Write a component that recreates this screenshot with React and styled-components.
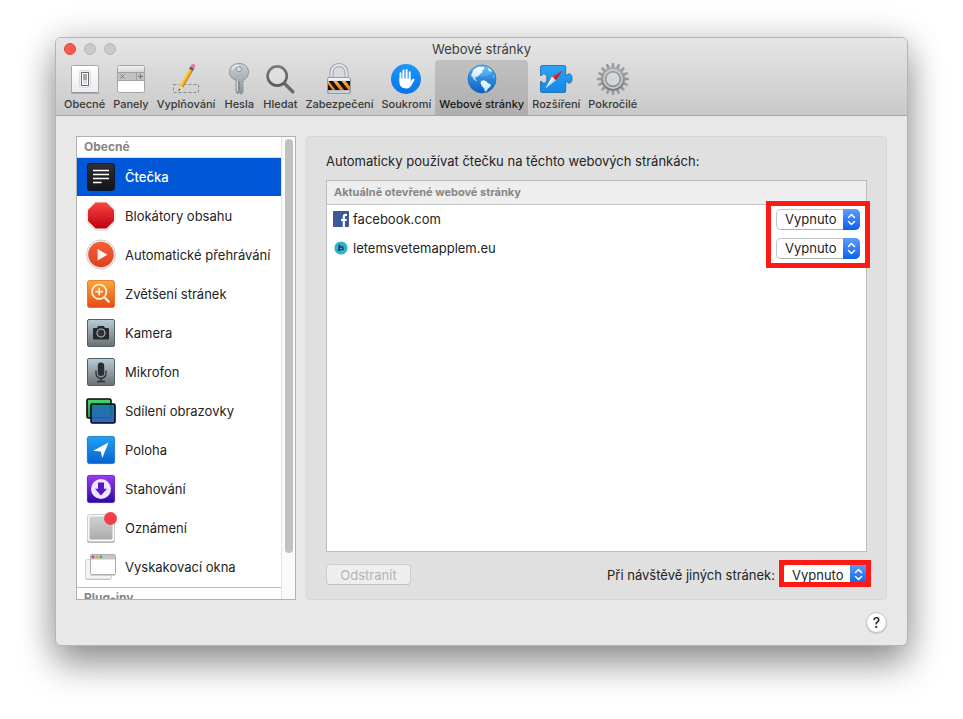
import React from "react";
import styled, { createGlobalStyle } from "styled-components";

const GlobalStyle = createGlobalStyle`
  *, *::before, *::after { box-sizing: border-box; }
  body { margin: 0; background: #fff; }
  body, button, select { font-family: Inter, "Noto Sans", sans-serif; font-size: 13px; color: #232323; }
`;

const Page = styled.main`
  height: 100vh;
  min-height: 420px;
  padding: 37px 55px 73px;
  display: flex;
`;

const Window = styled.section`
  flex: 1;
  min-width: 0;
  display: flex;
  flex-direction: column;
  overflow: hidden;
  background: #e8e8e8;
  border: 1px solid #b4b4b4;
  border-radius: 6px;
  box-shadow: 0 18px 36px rgba(0, 0, 0, 0.4), 0 0 36px rgba(0, 0, 0, 0.14);
`;

const TopBar = styled.header`
  background: linear-gradient(#e6e6e6, #c9c9c9);
  border-bottom: 1px solid #a5a5a5;
`;

const TitleRow = styled.div`
  display: grid;
  grid-template-columns: 1fr auto 1fr;
  align-items: center;
  height: 22px;
  padding: 0 8px;
`;

const Lights = styled.div`
  display: flex;
  gap: 8px;
`;

const Light = styled.button`
  width: 12px;
  height: 12px;
  padding: 0;
  border-radius: 50%;
  border: 1px solid ${(p) => (p.$close ? "#e2463f" : "#b5b5b5")};
  background: ${(p) => (p.$close ? "#fc5753" : "#cacaca")};
`;

const Title = styled.h1`
  margin: 0;
  font-size: 13px;
  line-height: 20px;
  font-weight: 400;
  color: #3c3c3c;
`;

const Toolbar = styled.nav`
  display: flex;
  padding: 0 4px;
`;

const Tool = styled.button`
  display: flex;
  flex-direction: column;
  align-items: center;
  gap: 2px;
  height: 55px;
  padding: 3px 4px 0;
  border: 0;
  border-radius: 4px 4px 0 0;
  font-size: 11px;
  line-height: 14px;
  font-weight: 500;
  white-space: nowrap;
  color: ${(p) => (p.$active ? "#161616" : "#383838")};
  background: ${(p) => (p.$active ? "rgba(0, 0, 0, 0.13)" : "transparent")};
`;

const Icon = styled.svg.attrs({ "aria-hidden": true })`
  display: block;
  flex: none;
  overflow: visible;
  width: ${(p) => p.$size ?? 32}px;
  height: ${(p) => p.$size ?? 32}px;
`;

const Content = styled.div`
  flex: 1;
  min-height: 0;
  display: grid;
  grid-template-columns: 220px minmax(0, 1fr);
  gap: 10px;
  padding: 20px 20px 0;
`;

const Sidebar = styled.aside`
  min-height: 0;
  display: grid;
  grid-template-columns: minmax(0, 1fr) 14px;
  overflow: hidden;
  background: #fff;
  border: 1px solid #b1b1b1;
`;

const SideScroll = styled.div`
  min-height: 0;
  overflow: hidden;
`;

const SideHeading = styled.h2`
  margin: 0;
  height: 21px;
  padding: 0 7px;
  font-size: 12px;
  line-height: 20px;
  font-weight: 700;
  color: #858585;
  border-top: ${(p) => (p.$divided ? "1px solid #bdbdbd" : "0")};
  border-bottom: 1px solid #d5dbe6;
`;

const SideList = styled.ul`
  list-style: none;
  margin: 0;
  padding: 0 0 1px;
  display: grid;
  gap: 1px;
`;

const SideItem = styled.button`
  display: flex;
  align-items: center;
  gap: 8px;
  width: 100%;
  height: 38px;
  padding: 0 8px;
  border: 0;
  text-align: left;
  white-space: nowrap;
  font-weight: ${(p) => (p.$active ? 500 : 400)};
  color: ${(p) => (p.$active ? "#fff" : "#232323")};
  background: ${(p) => (p.$active ? "#0058d8" : "transparent")};
`;

const Track = styled.div`
  padding: 2px 2px 46px 3px;
  background: #fafafa;
  border-left: 1px solid #e3e3e3;
`;

const Thumb = styled.div`
  width: 8px;
  height: 100%;
  border-radius: 4px;
  background: #c1c1c1;
`;

const Panel = styled.section`
  min-height: 0;
  display: flex;
  flex-direction: column;
  padding: 14px 19px;
  background: #e0e0e0;
  border: 1px solid #d7d7d7;
  border-radius: 4px;
`;

const PanelTitle = styled.h2`
  margin: 0 0 9px;
  font-size: 13px;
  line-height: 20px;
  font-weight: 400;
`;

const SitesBox = styled.div`
  flex: 1;
  min-height: 0;
  position: relative;
  background: #fff;
  border: 1px solid #bdbdbd;
`;

const Sites = styled.table`
  width: 100%;
  border-collapse: collapse;
`;

const HeadCell = styled.th`
  height: 23px;
  padding: 0 7px;
  font-size: 11px;
  line-height: 14px;
  font-weight: 700;
  text-align: left;
  color: #868686;
  background: #eeeeee;
  border-bottom: 1px solid #c4c4c4;
`;

const SiteRow = styled.tr`
  height: 29px;
`;

const SiteCell = styled.td`
  padding: ${(p) => (p.$end ? "4px 6px 4px 0" : "0 6px")};
`;

const SiteName = styled.div`
  display: flex;
  align-items: center;
  gap: 4px;
`;

const SelectWrap = styled.div`
  position: relative;
  width: 84px;
  height: 21px;
  margin-left: auto;
`;

const Select = styled.select`
  appearance: none;
  display: block;
  width: 100%;
  height: 21px;
  padding: 0 20px 0 8px;
  line-height: 18px;
  background: #fff;
  border: 1px solid #c6c6c6;
  border-bottom-color: #aeaeae;
  border-radius: 5px;
`;

const Stepper = styled.span`
  position: absolute;
  top: 0;
  right: 0;
  width: 17px;
  height: 21px;
  display: grid;
  place-items: center;
  pointer-events: none;
  border-radius: 0 5px 5px 0;
  background: linear-gradient(#5d9dfa, #0a60f0);
`;

const Marker = styled.span`
  position: absolute;
  top: ${(p) => p.$top}px;
  right: -4px;
  width: ${(p) => p.$width}px;
  height: ${(p) => p.$height}px;
  border: 5px solid #fd1a15;
  pointer-events: none;
`;

const PanelFoot = styled.div`
  display: flex;
  align-items: center;
  justify-content: space-between;
  margin-top: 12px;
`;

const RemoveButton = styled.button`
  width: 85px;
  height: 21px;
  padding: 0;
  line-height: 18px;
  color: #b4b4b4;
  background: #eeeeee;
  border: 1px solid #cdcdcd;
  border-bottom-color: #bfbfbf;
  border-radius: 4px;
`;

const OtherSites = styled.div`
  position: relative;
  display: flex;
  align-items: center;
  gap: 8px;
`;

const WindowFoot = styled.footer`
  display: flex;
  justify-content: flex-end;
  padding: 12px 20px;
`;

const HelpButton = styled.button`
  width: 21px;
  height: 21px;
  padding: 0;
  font-size: 14px;
  line-height: 18px;
  font-weight: 500;
  border: 1px solid #c2c2c2;
  border-radius: 50%;
  background: #fff;
  box-shadow: 0 1px 1px rgba(0, 0, 0, 0.15);
`;

function Gradients() {
  const list = [
    ["gPaper", "#ffffff", "#e9edf1"],
    ["gBar", "#f4f0f2", "#d6d2d4"],
    ["gKey", "#c9d0d4", "#8b9499"],
    ["gLens", "#7a7a7a", "#5c5c5c"],
    ["gSteel", "#eef1f5", "#a8afba"],
    ["gOrange", "#ffb04a", "#ee7a16"],
    ["gBlue", "#1f98fb", "#0a73ea"],
    ["gSea", "#4db2f7", "#0b5fc0"],
    ["gLand", "#ffffff", "#b9dcf5"],
    ["gPuzzle", "#2ba5f6", "#1586e6"],
    ["gGear", "#a5a9ad", "#777b80"],
    ["gDark", "#2f2f33", "#151518"],
    ["gStop", "#f8463f", "#bd0010"],
    ["gPlay", "#f3603a", "#df3f1c"],
    ["gZoom", "#fcaa35", "#e64a17"],
    ["gDevice", "#b9cdd8", "#6d6f70"],
    ["gGreen", "#43d86c", "#249a48"],
    ["gShare", "#12809a", "#3a5fc8"],
    ["gPlace", "#1fa3f4", "#0662cf"],
    ["gLoad", "#9a3cf2", "#2a0a9e"],
    ["gGrey", "#d0d1d3", "#a9abad"],
  ];
  return (
    <Icon $size={0}>
      <defs>
        {list.map(([id, a, b]) => (
          <linearGradient key={id} id={id} x1="0" y1="0" x2="0" y2="1">
            <stop offset="0" stopColor={a} />
            <stop offset="1" stopColor={b} />
          </linearGradient>
        ))}
      </defs>
    </Icon>
  );
}

const gearTeeth = Array.from({ length: 16 }, (_, i) => (i * 360) / 16);

const toolIcons = {
  general: (
    <>
      <rect x="2.5" y="2.5" width="27" height="27" rx="1" fill="url(#gPaper)" stroke="#a6a6a6" />
      <path d="M2 30h28" stroke="#858585" />
      <rect x="10.5" y="7.5" width="11" height="17" rx="2" fill="#f3f3f3" stroke="#dcdcdc" />
      <rect x="12.5" y="9.5" width="7" height="13" fill="#fff" stroke="#6d6d6d" />
      <rect x="14" y="11" width="4" height="6" fill="#a9a9a9" />
      <rect x="14" y="17" width="4" height="4" fill="#dedede" />
    </>
  ),
  tabs: (
    <>
      <rect x="2.5" y="2.5" width="27" height="27" rx="2" fill="#fff" stroke="#a4a4a4" />
      <path d="M3 10V4.5A1.500 1.500 0 0 1 4.500 3h23A1.500 1.500 0 0 1 29 4.500V10z" fill="url(#gBar)" />
      <rect x="3" y="10" width="26" height="7" fill="#c2c2c2" />
      <path d="M3 9.500h26M3 17.500h26M21.500 10v7" stroke="#a2a2a2" />
      <path d="M5.500 11.500l4 4m0-4l-4 4M25.500 11v5M23 13.500h5" stroke="#777" fill="none" />
    </>
  ),
  autofill: (
    <>
      <rect x="3.5" y="21.5" width="25" height="8" fill="none" stroke="#8a8a8a" strokeDasharray="3 2" />
      <g transform="translate(8.5 28) rotate(30.5)">
        <path d="M0 0L-2-6h4z" fill="#f0d5a5" />
        <path d="M0 0L-.9-2.400H.9z" fill="#333" />
        <rect x="-2.200" y="-25" width="4.400" height="19.500" fill="#f7b733" />
        <rect x="-2.200" y="-25" width="1.400" height="19.500" fill="#fbd566" />
        <rect x="1" y="-25" width="1.200" height="19.500" fill="#cd8517" />
        <rect x="-2.200" y="-27.500" width="4.400" height="3" fill="#59656f" />
        <path d="M-2.200-27.500v-2q0-1.500 2.200-1.500t2.200 1.500v2z" fill="#e2808e" />
      </g>
    </>
  ),
  passwords: (
    <>
      <path
        fillRule="evenodd"
        d="M16 .5c6 0 9.500 3.500 9.500 8.700 0 4-2.300 6.800-5.300 8v2.300l-1 1.200 1.200 1.300-1 1.500 1.200 1.500-1 1.500.8 1.500-1.800 3h-1.200l-1.400-2-1.400 2-1.600-2V17.200c-4-1.200-6.500-4-6.500-8C6.500 4 10 .5 16 .5zm0 3a2.600 2.600 0 1 0 0 5.200 2.600 2.600 0 0 0 0-5.200z"
        fill="url(#gKey)"
        stroke="#848c91"
        strokeWidth=".8"
      />
      <path d="M9 6.500q2-4 7-4.200" stroke="#eef2f4" strokeWidth="1.300" fill="none" />
      <path d="M16 18v10" stroke="#6d7579" />
      <path d="M14.300 18v10" stroke="#e1e6e8" />
    </>
  ),
  search: (
    <>
      <path d="M20.500 20.500l8.300 8.300" stroke="#6a6a6a" strokeWidth="3.400" strokeLinecap="round" />
      <circle cx="13.200" cy="13" r="9.600" fill="rgba(255,255,255,.16)" stroke="url(#gLens)" strokeWidth="2.600" />
    </>
  ),
  security: (
    <>
      <path d="M8.500 16V9.500a7.500 7.500 0 0 1 15 0V16" fill="none" stroke="#9aa1ab" strokeWidth="4" />
      <path d="M8.500 16V9.500a7.500 7.500 0 0 1 15 0V16" fill="none" stroke="#e2e6ed" strokeWidth="2" />
      <rect x="4.5" y="14.5" width="23" height="16" rx="1.500" fill="url(#gSteel)" stroke="#959aa3" />
      <rect x="5" y="18" width="22" height="9" fill="url(#gOrange)" />
      <path d="M5.500 18h4.500l7 9h-4.500zM14 18h4.500l7 9h-4.500zM22.500 18H27v5.800zM5 21v6h4.500z" fill="#18120e" />
      <path d="M6 16h20M6 29h20" stroke="#fbfcff" strokeWidth=".8" />
    </>
  ),
  privacy: (
    <>
      <circle cx="16" cy="16" r="15" fill="url(#gBlue)" />
      <g stroke="#fff" strokeWidth="2" strokeLinecap="round" fill="none">
        <path d="M10.500 18V10.200M13.400 17V7.600M16.600 17V7M19.700 17V9.200" />
        <path d="M20.800 20.500l2.700-4" />
      </g>
      <path d="M9.500 15.500h11.200v3.300l1.900-2.800 1.700 1-2.800 5.200c-1 2-2.600 3.200-5.300 3.200-4 0-6.700-2.300-6.700-5.700z" fill="#fff" />
    </>
  ),
  websites: (
    <>
      <circle cx="16" cy="16" r="14" fill="url(#gSea)" stroke="#1465b5" strokeWidth=".6" />
      <path d="M7.500 7c2-2 3.800-3 6-3.600l1.800.8 1.500-.7 1.800 1.400-.8 1.700-1.800.8.700 1.500-1.800 1.400-1.500 2-1.800.7.300 1.600-1.500-.8-1.300.8.600 1.900 1.900 1.200-1.300.2-2.500-1.500-1.300-2.500-1.500-1.400z" fill="url(#gLand)" />
      <path d="M15 18l2.700-.7 2.800 1.100 1.200 1.700 3.200 1.300-.6 2.400-2.200 1.600-1.300 2.600-2 .8-.7-3.400-2.200-2.300-1.200-2.700z" fill="url(#gLand)" />
      <path d="M21.500 4.500l2.600 1.600 2.300 2.700-1.800-.6-1.600.2-.5-1.600zM27.300 11l1.500 4-1.200-.8z" fill="#d9effd" />
      <ellipse cx="16" cy="8" rx="10.500" ry="5.500" fill="rgba(255,255,255,.15)" />
    </>
  ),
  extensions: (
    <>
      <path
        d="M2 2.500h22.500q1.200 0 1.200 1.200v8.800h1c.6-1.200 1.500-1.700 2.500-1.700 2 0 2.800 2.200 2.800 4.700s-.8 4.700-2.800 4.700c-1 0-1.900-.5-2.500-1.700h-1v9.800q0 1.200-1.200 1.200H2Q.5 29.500.5 28v-9.500h1.300c.6 1.200 1.300 1.700 2.300 1.700 2 0 2.800-2.200 2.800-4.700s-.8-4.700-2.800-4.700c-1 0-1.700.5-2.300 1.700H.5V4Q.5 2.500 2 2.500z"
        fill="url(#gPuzzle)"
        stroke="#1766ab"
        strokeWidth=".8"
      />
      <path d="M22.500 7.500L12 13.500l3.700 3.700z" fill="#f0322f" />
      <path d="M22.500 7.500L15.700 17.200l-1.800-1.900z" fill="#b41f24" />
      <path d="M5.500 25.300L12 13.500l3.700 3.700z" fill="#fff" />
      <path d="M5.500 25.300l8.400-10 1.800 1.900z" fill="#ccd6df" />
    </>
  ),
  advanced: (
    <>
      {gearTeeth.map((a) => (
        <path key={a} transform={`rotate(${a} 16 16)`} d="M14.200 5l.8-5h2l.8 5z" fill="#979b9f" />
      ))}
      <circle cx="16" cy="16" r="9.500" fill="none" stroke="url(#gGear)" strokeWidth="4.600" />
      <circle cx="16" cy="16" r="9" fill="none" stroke="#c6c9cc" strokeWidth="2" />
      <circle cx="16" cy="16" r="7" fill="none" stroke="#7d8185" strokeWidth=".8" />
    </>
  ),
};

const sideIcons = {
  reader: (
    <>
      <rect x="2.5" y="2.5" width="27" height="27" rx="2.500" fill="url(#gDark)" stroke="#0c1a33" />
      <path d="M8 9.500h16M8 13.500h16M8 17.500h16M8 21.500h8.500" stroke="#fff" strokeWidth="1.600" />
    </>
  ),
  blockers: (
    <>
      <path d="M10 1.500h12L30.500 10v12L22 30.500H10L1.500 22V10z" fill="#bababa" opacity=".7" />
      <path d="M10 1h12l8.500 8.500v12L22 30H10l-8.500-8.500v-12z" fill="#f1eeee" />
      <path d="M10.600 2.500h10.800L29 10.100v10.800l-7.600 7.600H10.600L3 20.900V10.100z" fill="url(#gStop)" />
    </>
  ),
  autoplay: (
    <>
      <circle cx="16" cy="15.500" r="14.500" fill="#f4f1f1" stroke="#cfc9cb" />
      <circle cx="16" cy="15.500" r="12.800" fill="url(#gPlay)" />
      <path d="M12.600 10v11.400l9.800-5.700z" fill="#fff3ee" />
    </>
  ),
  zoom: (
    <>
      <rect x="2.5" y="2.5" width="27" height="27" rx="2" fill="url(#gZoom)" stroke="#dd6a1c" strokeWidth=".8" />
      <g fill="none" stroke="#fff1df" strokeLinecap="round">
        <circle cx="14.200" cy="13.700" r="7.200" strokeWidth="1.700" />
        <path d="M19.500 19.300l4.300 4.500" strokeWidth="2.200" />
        <path d="M14.200 10.700v6M11.200 13.700h6" strokeWidth="1.700" />
      </g>
    </>
  ),
  camera: (
    <>
      <rect x="2.5" y="2.5" width="27" height="27" rx="1.500" fill="url(#gDevice)" stroke="#4d606b" />
      <path d="M9 11h3l1.200-2h5.600l1.200 2h3q1 0 1 1v9.500q0 1-1 1H9q-1 0-1-1V12q0-1 1-1z" fill="#26292b" />
      <circle cx="16" cy="16" r="4" fill="#303336" stroke="#aab2b6" strokeWidth="1.200" />
    </>
  ),
  microphone: (
    <>
      <rect x="2.5" y="2.5" width="27" height="27" rx="1.500" fill="url(#gDevice)" stroke="#4d606b" />
      <rect x="12.800" y="6.500" width="6.400" height="13.500" rx="3.200" fill="#2b2e30" />
      <path d="M11 14.500v3a5 5 0 0 0 10 0v-3M16 22.500v3M12 25.500h8" fill="none" stroke="#2b2e30" strokeWidth="1.300" />
    </>
  ),
  sharing: (
    <>
      <rect x="2" y="4" width="24" height="19" rx="1.500" fill="url(#gGreen)" stroke="#050807" strokeWidth="1.600" />
      <rect x="6" y="9" width="24" height="19" rx="1.500" fill="url(#gShare)" stroke="#05080d" strokeWidth="1.600" />
      <path d="M7 22.800h18.800V10" fill="none" stroke="#12647d" />
    </>
  ),
  location: (
    <>
      <rect x="2.400" y="2.400" width="27.200" height="27.200" rx="2" fill="url(#gPlace)" stroke="#0b6bc4" strokeWidth=".8" />
      <path d="M8.200 16.700L23.500 8.600l-6.200 15.300-1.500-6.500z" fill="#fff" />
    </>
  ),
  downloads: (
    <>
      <rect x="2.400" y="2.400" width="27.200" height="27.200" rx="2" fill="url(#gLoad)" stroke="#43179e" strokeWidth=".8" />
      <circle cx="16" cy="16" r="10" fill="#efe6ff" />
      <path d="M13 9.500h6v6.200h3L16 22.500l-6-6.800h3z" fill="#5318c4" />
    </>
  ),
  notifications: (
    <>
      <rect x="2" y="3" width="28" height="28" rx="2.500" fill="#b5b5b5" />
      <rect x="2.5" y="2.5" width="27" height="27" rx="2.500" fill="#f7f7f7" stroke="#cfcfcf" />
      <rect x="4.5" y="4.5" width="23" height="23" rx="1.500" fill="url(#gGrey)" />
      <circle cx="25.500" cy="6.500" r="6.500" fill="#f04148" />
    </>
  ),
  popups: (
    <>
      <rect x=".5" y="9.5" width="26" height="19.500" rx="2" fill="#bcbcbc" />
      <rect x=".5" y="8.5" width="26" height="19.500" rx="2" fill="#f4f4f4" stroke="#cfcfcf" />
      <rect x="5.5" y="4.5" width="25" height="20" rx="1" fill="#aaa" />
      <rect x="5.5" y="3.5" width="25" height="20" rx="1" fill="#fdfdfd" stroke="#adadad" />
      <rect x="6" y="4" width="24" height="4.500" fill="#c6c6c6" />
      <circle cx="8" cy="6" r="1.400" fill="#e3405c" />
      <circle cx="12" cy="6" r="1.400" fill="#e9a33b" />
      <circle cx="16" cy="6" r="1.400" fill="#42b54b" />
    </>
  ),
};

const siteIcons = {
  facebook: (
    <>
      <rect width="16" height="16" rx="1" fill="#3b5999" />
      <path d="M14 3.800h-1.300q-1.900 0-1.900 2V16M8 9h5.600" fill="none" stroke="#fff" strokeWidth="2.200" />
    </>
  ),
  apple: (
    <>
      <circle cx="8" cy="8" r="6.600" fill="#2fb4cf" />
      <path d="M5.500 4.500l2 .2.500 2 1.500-.8 1.500.9-1 1.300 1.400 1-1 1.500-2-.6-1.600 1.200-2.600-.7L5.300 9z" fill="#17495c" />
      <path d="M7 8.500l2 .2" stroke="#6fd0e0" strokeWidth=".8" />
    </>
  ),
};

const tools = [
  ["general", "Obecné"],
  ["tabs", "Panely"],
  ["autofill", "Vyplňování"],
  ["passwords", "Hesla"],
  ["search", "Hledat"],
  ["security", "Zabezpečení"],
  ["privacy", "Soukromí"],
  ["websites", "Webové stránky"],
  ["extensions", "Rozšíření"],
  ["advanced", "Pokročilé"],
];

const categories = [
  ["reader", "Čtečka"],
  ["blockers", "Blokátory obsahu"],
  ["autoplay", "Automatické přehrávání"],
  ["zoom", "Zvětšení stránek"],
  ["camera", "Kamera"],
  ["microphone", "Mikrofon"],
  ["sharing", "Sdílení obrazovky"],
  ["location", "Poloha"],
  ["downloads", "Stahování"],
  ["notifications", "Oznámení"],
  ["popups", "Vyskakovací okna"],
];

const sites = [
  ["facebook", "facebook.com"],
  ["apple", "letemsvetemapplem.eu"],
];

function Popup({ id, label }) {
  return (
    <SelectWrap>
      <Select id={id} aria-label={label} defaultValue="off">
        <option value="off">Vypnuto</option>
        <option value="on">Zapnuto</option>
      </Select>
      <Stepper>
        <Icon $size={13} viewBox="0 0 13 13">
          <path d="M3.500 4.500l3-3 3 3M3.500 8.500l3 3 3-3" fill="none" stroke="#fff" strokeWidth="1.500" strokeLinecap="round" strokeLinejoin="round" />
        </Icon>
      </Stepper>
    </SelectWrap>
  );
}

export default function App() {
  return (
    <Page>
      <GlobalStyle />
      <Window>
        <Gradients />
        <TopBar>
          <TitleRow>
            <Lights>
              <Light $close aria-label="Zavřít" />
              <Light aria-label="Minimalizovat" />
              <Light aria-label="Zvětšit" />
            </Lights>
            <Title>Webové stránky</Title>
          </TitleRow>
          <Toolbar>
            {tools.map(([icon, label]) => (
              <Tool key={icon} $active={icon === "websites"}>
                <Icon viewBox="0 0 32 32">{toolIcons[icon]}</Icon>
                {label}
              </Tool>
            ))}
          </Toolbar>
        </TopBar>
        <Content>
          <Sidebar>
            <SideScroll>
              <SideHeading>Obecné</SideHeading>
              <SideList>
                {categories.map(([icon, label]) => (
                  <li key={icon}>
                    <SideItem $active={icon === "reader"}>
                      <Icon viewBox="0 0 32 32">{sideIcons[icon]}</Icon>
                      {label}
                    </SideItem>
                  </li>
                ))}
              </SideList>
              <SideHeading $divided>Plug-iny</SideHeading>
            </SideScroll>
            <Track>
              <Thumb />
            </Track>
          </Sidebar>
          <Panel>
            <PanelTitle>Automaticky používat čtečku na těchto webových stránkách:</PanelTitle>
            <SitesBox>
              <Sites>
                <thead>
                  <tr>
                    <HeadCell colSpan={2}>Aktuálně otevřené webové stránky</HeadCell>
                  </tr>
                </thead>
                <tbody>
                  {sites.map(([icon, name]) => (
                    <SiteRow key={name}>
                      <SiteCell>
                        <SiteName>
                          <Icon $size={16} viewBox="0 0 16 16">{siteIcons[icon]}</Icon>
                          {name}
                        </SiteName>
                      </SiteCell>
                      <SiteCell $end>
                        <Popup label={name} />
                      </SiteCell>
                    </SiteRow>
                  ))}
                </tbody>
              </Sites>
              <Marker $top={20} $width={104} $height={67} />
            </SitesBox>
            <PanelFoot>
              <RemoveButton disabled>Odstranit</RemoveButton>
              <OtherSites>
                <label htmlFor="other-sites">Při návštěvě jiných stránek:</label>
                <Popup id="other-sites" />
                <Marker $top={-4} $width={92} $height={27} />
              </OtherSites>
            </PanelFoot>
          </Panel>
        </Content>
        <WindowFoot>
          <HelpButton aria-label="Nápověda">?</HelpButton>
        </WindowFoot>
      </Window>
    </Page>
  );
}
